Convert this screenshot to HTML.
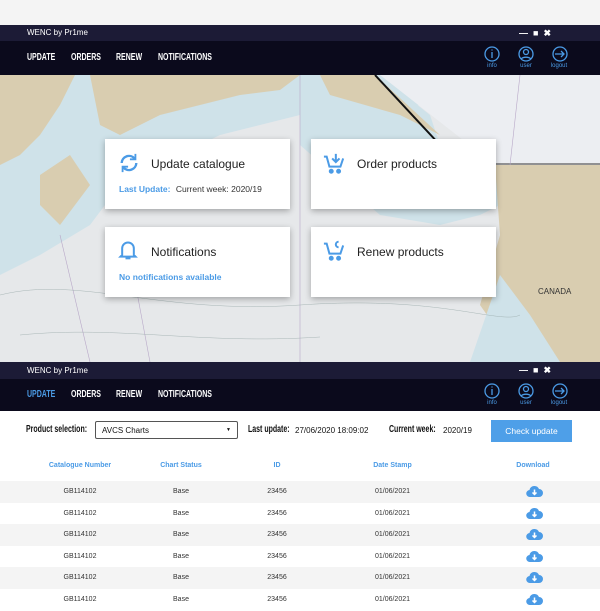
<!DOCTYPE html>
<html><head><style>
*{margin:0;padding:0;box-sizing:border-box}
body{width:600px;height:600px;overflow:hidden;background:#f4f4f4;font-family:"Liberation Sans",sans-serif;position:relative}
.abs{position:absolute}
.tb{left:0;width:600px;height:16px;background:#1c1b36;color:#fff;font-size:8px;line-height:16px;padding-left:27px}
.nav{left:0;width:600px;background:#0b0a1c;color:#fff;font-weight:bold;font-size:10px}
.nav span,.cn{position:absolute;transform:scaleX(.7);transform-origin:0 0;white-space:nowrap}
.ic{position:absolute;color:#4b9be6;font-size:6px;text-align:center;width:24px}
.card{position:absolute;background:#fff;box-shadow:0 2px 6px rgba(0,0,0,.3);width:185px;height:70px}
.card .t{position:absolute;left:46px;top:18px;font-size:12px;color:#222}
.card .s{position:absolute;left:14px;top:45px;font-size:8.5px;color:#4b9be6;font-weight:bold}
.row{position:absolute;left:0;width:600px;height:21.6px;font-size:7px;color:#333}
.row span{position:absolute;top:7px;text-align:center}
.h{position:absolute;top:462px;font-size:7px;color:#4b9be6;font-weight:bold;text-align:center}
</style></head><body>
<div class="abs tb" style="top:25px">WENC by Pr1me</div>
<div class="abs" style="top:25px;left:519px;color:#fff;font-size:9px;font-weight:bold;line-height:16px">&#8212;&nbsp;&nbsp;&#9632;&nbsp;&nbsp;&#10006;</div>
<div class="abs nav" style="top:41px;height:34px">
<span style="left:27px;top:11px">UPDATE</span><span style="left:71px;top:11px">ORDERS</span><span style="left:116px;top:11px">RENEW</span><span style="left:158px;top:11px">NOTIFICATIONS</span>
</div>
<svg class="abs" style="left:0;top:75px" width="600" height="287">
<rect width="600" height="287" fill="#e6e8ea"/>
<path d="M0 0H380L420 30 300 40 220 60 160 90 120 110 90 150 40 180 0 200Z" fill="#cfe2e9"/>
<path d="M0 0H75L60 30 40 60 20 80 0 90Z" fill="#d9cdb0"/>
<path d="M90 0H300L280 15 240 20 200 30 160 40 120 60 100 50Z" fill="#d9cdb0"/>
<path d="M40 100 70 80 90 110 60 150 40 130Z" fill="#d9cdb0"/>
<path d="M300 0H380L430 40 440 70 500 80 520 120 480 140 440 150 380 140 300 70Z" fill="#cfe2e9"/>
<path d="M320 0H375L440 60 400 40 330 20Z" fill="#d9cdb0"/>
<path d="M375 0L440 70" stroke="#111" stroke-width="2"/>
<path d="M380 0H600V90H495Z" fill="#eceef2"/>
<path d="M495 90H600V287H520L480 230 500 160Z" fill="#d9cdb0"/>
<path d="M500 200 530 240 560 287H470Z" fill="#cfe2e9"/>
<path d="M495 89H600" stroke="#333" stroke-width="1"/>
<g stroke="#b8a8c8" stroke-width=".6" fill="none"><path d="M60 160 90 287M130 180 150 287M300 0V287M520 0 510 90"/></g>
<g stroke="#9aa" stroke-width=".4" fill="none"><path d="M0 220C80 200 160 240 300 230S500 250 520 240M20 260C120 250 200 270 320 262"/></g>
</svg>
<div class="abs" style="left:538px;top:287px;font-size:8px;color:#333">CANADA</div>
<div class="card" style="left:105px;top:139px">
<svg class="abs" style="left:13px;top:13px" width="22" height="22" viewBox="0 0 24 24" fill="none" stroke="#4b9be6" stroke-width="2.6"><path d="M4 12a8 8 0 0 1 14-5"/><path d="M20 12a8 8 0 0 1-14 5"/><path d="M19 2v6h-6M5 22v-6h6" stroke-width="2"/></svg>
<div class="t">Update catalogue</div>
<div class="s">Last Update: <span style="color:#333;font-weight:normal;margin-left:3px">Current week: 2020/19</span></div></div>
<div class="card" style="left:311px;top:139px">
<svg class="abs" style="left:12px;top:13px" width="22" height="22" viewBox="0 0 24 24" fill="none" stroke="#4b9be6" stroke-width="2.2"><path d="M1 5h3l3 11h12l3-9"/><path d="M14 2v8M10 7l4 4 4-4"/><circle cx="9" cy="21" r="1.6" fill="#4b9be6"/><circle cx="17" cy="21" r="1.6" fill="#4b9be6"/></svg>
<div class="t">Order products</div></div>
<div class="card" style="left:105px;top:227px">
<svg class="abs" style="left:13px;top:12px" width="20" height="22" viewBox="0 0 24 24" fill="none" stroke="#4b9be6" stroke-width="2.4"><path d="M5 18V10a7 7 0 0 1 14 0v8l2 2H3z"/><path d="M9 22h6"/></svg>
<div class="t">Notifications</div>
<div class="s">No notifications available</div></div>
<div class="card" style="left:311px;top:227px">
<svg class="abs" style="left:12px;top:12px" width="22" height="22" viewBox="0 0 24 24" fill="none" stroke="#4b9be6" stroke-width="2.2"><path d="M1 5h3l3 11h12l3-9"/><path d="M17 3a3 3 0 1 0 0 6" /><circle cx="9" cy="21" r="1.6" fill="#4b9be6"/><circle cx="17" cy="21" r="1.6" fill="#4b9be6"/></svg>
<div class="t">Renew products</div></div>
<div class="abs tb" style="top:362px;height:17px;line-height:17px">WENC by Pr1me</div>
<div class="abs" style="top:362px;left:519px;color:#fff;font-size:9px;font-weight:bold;line-height:17px">&#8212;&nbsp;&nbsp;&#9632;&nbsp;&nbsp;&#10006;</div>
<div class="abs nav" style="top:379px;height:32px">
<span style="left:27px;top:10px;color:#4b9be6">UPDATE</span><span style="left:71px;top:10px">ORDERS</span><span style="left:116px;top:10px">RENEW</span><span style="left:158px;top:10px">NOTIFICATIONS</span>
</div>
<div class="abs" style="top:411px;left:0;width:600px;height:189px;background:#fff"></div>
<svg class="abs" style="left:484px;top:45px" width="90" height="20" viewBox="0 0 90 20" fill="none" stroke="#4b9be6" stroke-width="1.3"><circle cx="8" cy="9" r="7"/><path d="M8 7v6M8 4.5v1"/><circle cx="42" cy="9" r="7"/><circle cx="42" cy="7" r="2.5"/><path d="M37 14a6 4 0 0 1 10 0"/><circle cx="76" cy="9" r="7"/><path d="M71 9h9M77 6l3 3-3 3"/></svg>
<div class="ic" style="left:480px;top:63px">info</div><div class="ic" style="left:514px;top:63px">user</div><div class="ic" style="left:547px;top:63px">logout</div>
<svg class="abs" style="left:484px;top:382px" width="90" height="20" viewBox="0 0 90 20" fill="none" stroke="#4b9be6" stroke-width="1.3"><circle cx="8" cy="9" r="7"/><path d="M8 7v6M8 4.5v1"/><circle cx="42" cy="9" r="7"/><circle cx="42" cy="7" r="2.5"/><path d="M37 14a6 4 0 0 1 10 0"/><circle cx="76" cy="9" r="7"/><path d="M71 9h9M77 6l3 3-3 3"/></svg>
<div class="ic" style="left:480px;top:400px">info</div><div class="ic" style="left:514px;top:400px">user</div><div class="ic" style="left:547px;top:400px">logout</div>
<b class="cn" style="left:26px;top:424px;font-size:10px;color:#111">Product selection:</b>
<div class="abs" style="left:95px;top:421px;width:143px;height:18px;border:1px solid #555;border-radius:2px;font-size:8px;padding:4px 0 0 6px;color:#111">AVCS Charts<span style="position:absolute;right:6px;top:5px;font-size:5px">&#9660;</span></div>
<b class="cn" style="left:248px;top:424px;font-size:10px;color:#111">Last update:</b>
<div class="abs" style="left:295px;top:426px;font-size:8px;color:#111">27/06/2020 18:09:02</div>
<b class="cn" style="left:389px;top:424px;font-size:10px;color:#111">Current week:</b>
<div class="abs" style="left:443px;top:426px;font-size:8px;color:#111">2020/19</div>
<div class="abs" style="left:491px;top:420px;width:81px;height:22px;background:#4e9fe8;color:#fff;font-size:8.5px;text-align:center;line-height:22px">Check update</div>
<div class="h" style="left:40px;width:80px">Catalogue Number</div>
<div class="h" style="left:145px;width:72px">Chart Status</div>
<div class="h" style="left:262px;width:30px">ID</div>
<div class="h" style="left:360px;width:65px">Date Stamp</div>
<div class="h" style="left:505px;width:56px">Download</div>
<div id="rows"></div>
<script>
var h='';for(var i=0;i<6;i++){var t=481+i*21.6;h+='<div class="row" style="top:'+t+'px;background:'+(i%2?'#fff':'#f4f4f4')+'"><span style="left:40px;width:80px">GB114102</span><span style="left:145px;width:72px">Base</span><span style="left:262px;width:30px">23456</span><span style="left:360px;width:65px">01/06/2021</span><svg style="position:absolute;left:526px;top:4px" width="17" height="13" viewBox="0 0 17 13"><path d="M4 12a3.5 3.5 0 0 1-.5-7A5 5 0 0 1 13 4a4 4 0 0 1 0 8z" fill="#4b9be6"/><path d="M8.5 4.5v5M6.5 7.5l2 2 2-2" stroke="#fff" stroke-width="1.5" fill="none"/></svg></div>';}
document.getElementById('rows').innerHTML=h;
</script>
</body></html>
